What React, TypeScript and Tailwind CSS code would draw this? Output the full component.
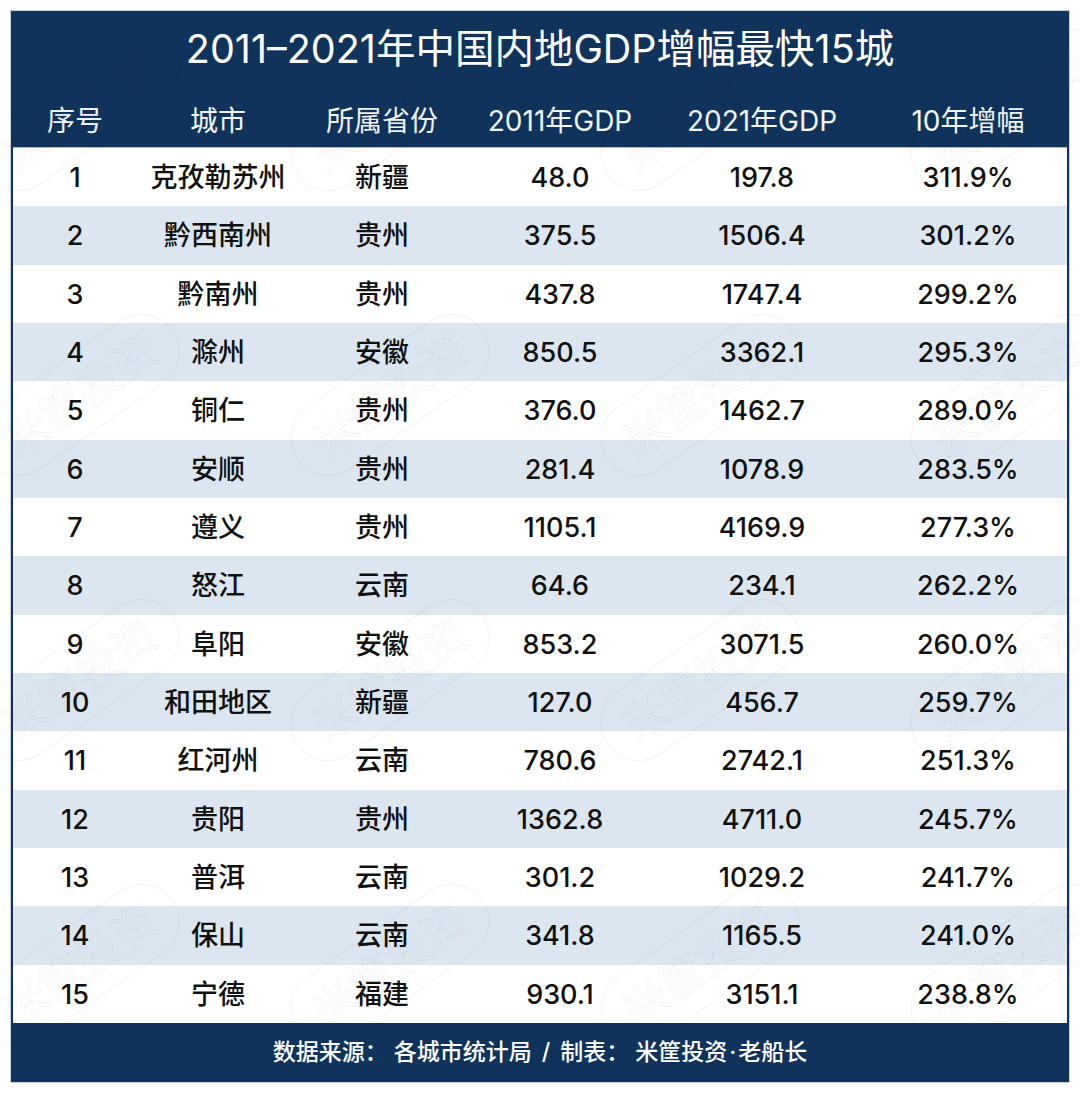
import React from "react"

const rows: [string, string, string, string, string, string][] = [
  ["1", "克孜勒苏州", "新疆", "48.0", "197.8", "311.9%"],
  ["2", "黔西南州", "贵州", "375.5", "1506.4", "301.2%"],
  ["3", "黔南州", "贵州", "437.8", "1747.4", "299.2%"],
  ["4", "滁州", "安徽", "850.5", "3362.1", "295.3%"],
  ["5", "铜仁", "贵州", "376.0", "1462.7", "289.0%"],
  ["6", "安顺", "贵州", "281.4", "1078.9", "283.5%"],
  ["7", "遵义", "贵州", "1105.1", "4169.9", "277.3%"],
  ["8", "怒江", "云南", "64.6", "234.1", "262.2%"],
  ["9", "阜阳", "安徽", "853.2", "3071.5", "260.0%"],
  ["10", "和田地区", "新疆", "127.0", "456.7", "259.7%"],
  ["11", "红河州", "云南", "780.6", "2742.1", "251.3%"],
  ["12", "贵阳", "贵州", "1362.8", "4711.0", "245.7%"],
  ["13", "普洱", "云南", "301.2", "1029.2", "241.7%"],
  ["14", "保山", "云南", "341.8", "1165.5", "241.0%"],
  ["15", "宁德", "福建", "930.1", "3151.1", "238.8%"],
]

const heads = ["序号", "城市", "所属省份", "2011年GDP", "2021年GDP", "10年增幅"]

const grid = "grid grid-cols-[124px_162px_166px_190px_214px_1fr] items-center text-center"

// faint stamp watermarks laid over the table
const stamps = [
  [80, 110], [390, 110], [700, 110], [1010, 110],
  [80, 395], [390, 395], [700, 395], [1010, 395],
  [80, 680], [390, 680], [700, 680], [1010, 680],
  [80, 965], [390, 965], [700, 965], [1010, 965],
]

function Stamp({ x, y }: { x: number; y: number }) {
  return (
    <div
      aria-hidden
      className="absolute -translate-x-1/2 -translate-y-1/2 -rotate-[35deg] rounded-[40px] border-[1.5px] border-black/[0.05] px-6 py-1 whitespace-nowrap text-[44px] text-transparent [-webkit-text-stroke:1px_rgba(0,0,0,0.065)] pointer-events-none select-none"
      style={{ left: x, top: y }}
    >
      米筐投资
    </div>
  )
}

export default function App() {
  return (
    <div className="relative w-[1080px] h-[1093px] overflow-hidden bg-white pl-[11px] pt-[11px] font-['Inter','Noto_Sans_CJK_SC',sans-serif]">
      <div className="w-[1058px] bg-[#10335c] px-[2px] shadow-[0_0_0_1px_#c9d2dc]">
        <div className="h-[78px] flex items-center justify-center text-[39.5px] font-normal text-white">
          2011–2021年中国内地GDP增幅最快15城
        </div>
        <div className={`${grid} h-[58px] text-[28px] text-[#f2f4f7] pt-[5px]`}>
          {heads.map((h) => (
            <div key={h}>{h}</div>
          ))}
        </div>
        <div className="border-t border-[#aebccc]">
          {rows.map((r, i) => (
            <div
              key={r[0]}
              className={`${grid} h-[58.33px] pt-[2px] text-[27px] font-medium text-[#111] ${i % 2 === 1 ? "bg-[#dce6f1]" : "bg-white"}`}
            >
              {r.map((c, j) => (
                <div key={j}>{c}</div>
              ))}
            </div>
          ))}
        </div>
        <div className="h-[59px] flex items-center justify-center text-[23px] font-medium text-white">
          <span>数据来源：</span>
          <span className="ml-[6px]">各城市统计局</span>
          <span className="mx-[10px]">/</span>
          <span>制表：</span>
          <span className="ml-[6px]">米筐投资</span>
          <span className="mx-[2px]">·</span>
          <span>老船长</span>
        </div>
      </div>
      {stamps.map(([x, y], i) => (
        <Stamp key={i} x={x} y={y} />
      ))}
    </div>
  )
}
